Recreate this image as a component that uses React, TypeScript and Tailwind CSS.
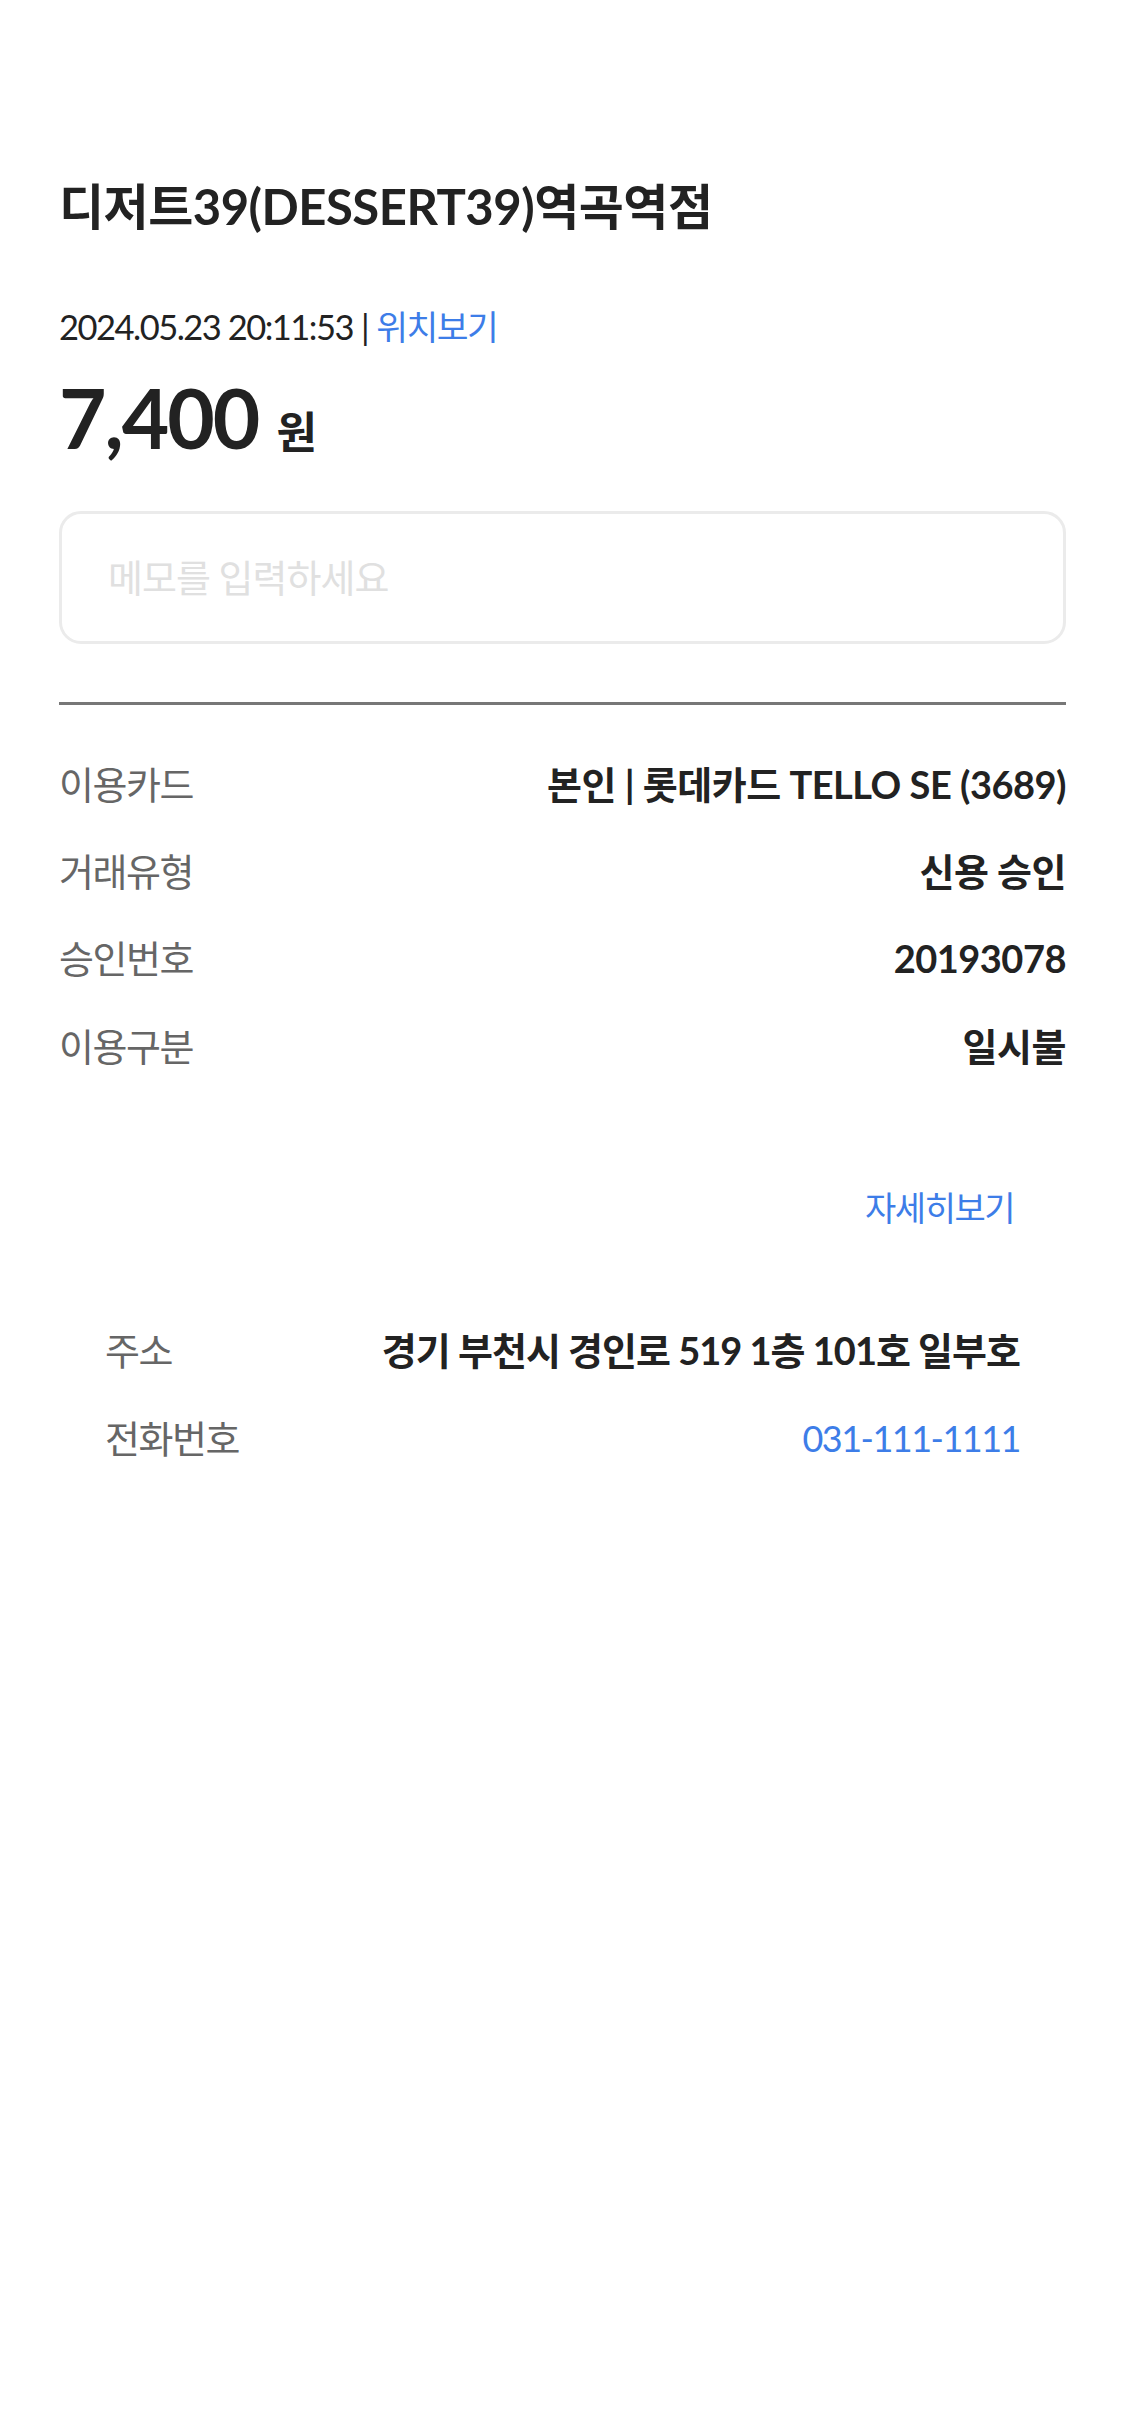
import { useState } from "react"

const details = [
  { label: "이용카드", value: "본인 | 롯데카드 TELLO SE (3689)" },
  { label: "거래유형", value: "신용 승인" },
  { label: "승인번호", value: "20193078" },
  { label: "이용구분", value: "일시불" },
]

export default function App() {
  const [memo, setMemo] = useState("")

  return (
    <div className="min-h-screen bg-white font-['Lato','Noto_Sans_CJK_KR',sans-serif] text-[#222]">
      <div className="px-[59px] pt-[175px]">
        <h1 className="text-[49px] font-bold leading-[1.3] tracking-[-0.5px]">디저트39(DESSERT39)역곡역점</h1>

        <div className="mt-[66px] flex items-center text-[34.5px] leading-[1.3] tracking-[-1.5px]">
          <span>2024.05.23 20:11:53</span>
          <span className="ml-[8px] mr-[8px]">|</span>
          <button className="text-[#3d7de8]">위치보기</button>
        </div>

        <div className="mt-[22px] flex items-baseline gap-[18px]">
          <strong className="text-[82px] font-bold leading-[1.1] tracking-[-2px]">7,400</strong>
          <span className="text-[44px] font-bold">원</span>
        </div>

        <input
          value={memo}
          onChange={(e) => setMemo(e.target.value)}
          placeholder="메모를 입력하세요"
          className="mt-[46px] h-[133px] w-full rounded-[22px] border-[3px] border-[#ebebeb] px-[46px] text-[38px] tracking-[-1px] outline-none placeholder:text-[#e0e0e0]"
        />

        <div className="mt-[58px] h-[3px] bg-[#777]" />

        <dl className="mt-[55px] flex flex-col gap-[38px]">
          {details.map((d) => (
            <div key={d.label} className="flex items-center justify-between text-[38px] leading-[1.3]">
              <dt className="tracking-[-1.5px] text-[#666]">{d.label}</dt>
              <dd className="font-bold tracking-[-0.5px] text-[#222]">{d.value}</dd>
            </div>
          ))}
        </dl>

        <div className="ml-[46px] mr-[52px] mt-[115px] flex justify-end">
          <button className="text-[34px] leading-[1.3] tracking-[-1.5px] text-[#3d7de8]">자세히보기</button>
        </div>

        <dl className="mx-[46px] mt-[96px] flex flex-col gap-[38px]">
          <div className="flex items-center justify-between text-[38px] leading-[1.3]">
            <dt className="tracking-[-1.5px] text-[#666]">주소</dt>
            <dd className="font-bold tracking-[-1px] text-[#222]">경기 부천시 경인로 519 1층 101호 일부호</dd>
          </div>
          <div className="flex items-center justify-between text-[38px] leading-[1.3]">
            <dt className="tracking-[-1.5px] text-[#666]">전화번호</dt>
            <dd className="text-[36px] tracking-[-1.5px] text-[#3d7de8]">031-111-1111</dd>
          </div>
        </dl>
      </div>
    </div>
  )
}
